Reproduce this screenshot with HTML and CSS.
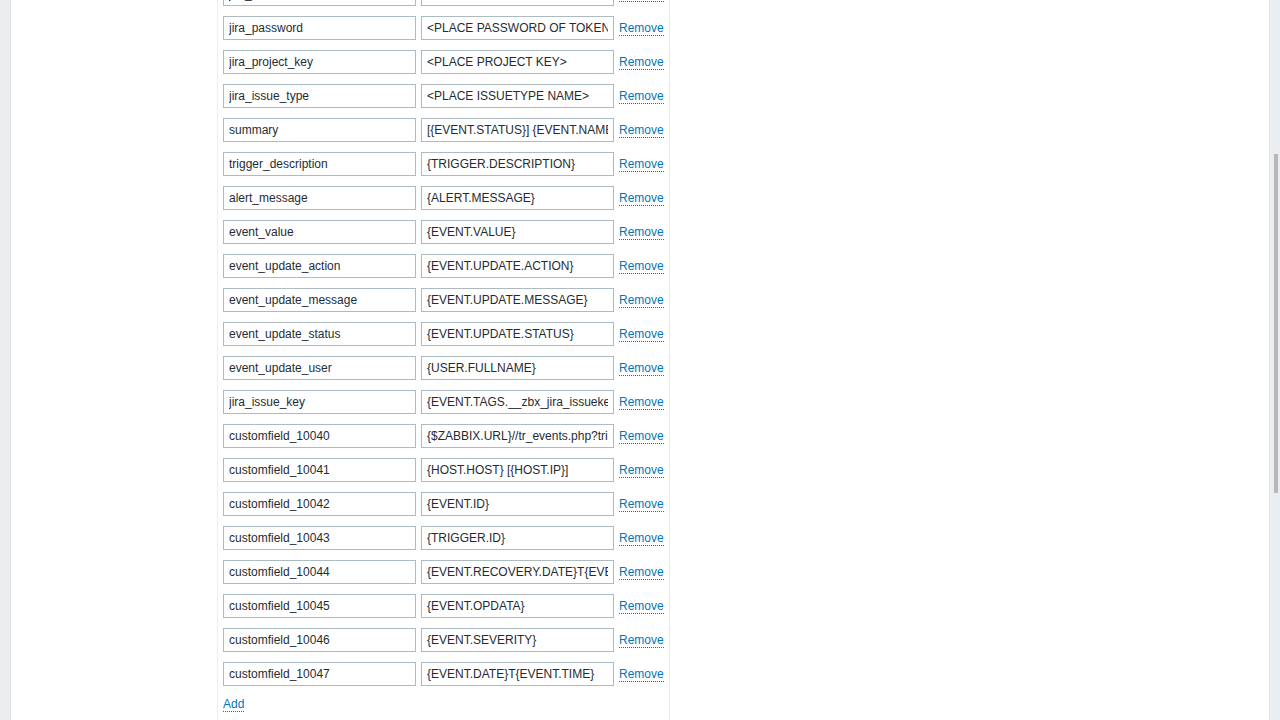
FILE: index.html
```html
<!DOCTYPE html>
<html lang="en">
<head>
  <meta charset="UTF-8">
  <title>Media type parameters</title>
  <link rel="stylesheet" href="styles.css">
</head>
<body>
  <div class="page">
    <!-- Left sidebar edge -->
    <div class="side-edge"></div>

    <div class="content">
      <div class="panel">
        <div class="params">
          <div class="param-row">
            <input class="param-input" type="text" value="jira_user">
            <input class="param-input" type="text" value="&lt;PLACE USERNAME&gt;">
            <a class="link" href="#">Remove</a>
          </div>
          <div class="param-row">
            <input class="param-input" type="text" value="jira_password">
            <input class="param-input" type="text" value="&lt;PLACE PASSWORD OF TOKEN&gt;">
            <a class="link" href="#">Remove</a>
          </div>
          <div class="param-row">
            <input class="param-input" type="text" value="jira_project_key">
            <input class="param-input" type="text" value="&lt;PLACE PROJECT KEY&gt;">
            <a class="link" href="#">Remove</a>
          </div>
          <div class="param-row">
            <input class="param-input" type="text" value="jira_issue_type">
            <input class="param-input" type="text" value="&lt;PLACE ISSUETYPE NAME&gt;">
            <a class="link" href="#">Remove</a>
          </div>
          <div class="param-row">
            <input class="param-input" type="text" value="summary">
            <input class="param-input" type="text" value="[{EVENT.STATUS}] {EVENT.NAME}">
            <a class="link" href="#">Remove</a>
          </div>
          <div class="param-row">
            <input class="param-input" type="text" value="trigger_description">
            <input class="param-input" type="text" value="{TRIGGER.DESCRIPTION}">
            <a class="link" href="#">Remove</a>
          </div>
          <div class="param-row">
            <input class="param-input" type="text" value="alert_message">
            <input class="param-input" type="text" value="{ALERT.MESSAGE}">
            <a class="link" href="#">Remove</a>
          </div>
          <div class="param-row">
            <input class="param-input" type="text" value="event_value">
            <input class="param-input" type="text" value="{EVENT.VALUE}">
            <a class="link" href="#">Remove</a>
          </div>
          <div class="param-row">
            <input class="param-input" type="text" value="event_update_action">
            <input class="param-input" type="text" value="{EVENT.UPDATE.ACTION}">
            <a class="link" href="#">Remove</a>
          </div>
          <div class="param-row">
            <input class="param-input" type="text" value="event_update_message">
            <input class="param-input" type="text" value="{EVENT.UPDATE.MESSAGE}">
            <a class="link" href="#">Remove</a>
          </div>
          <div class="param-row">
            <input class="param-input" type="text" value="event_update_status">
            <input class="param-input" type="text" value="{EVENT.UPDATE.STATUS}">
            <a class="link" href="#">Remove</a>
          </div>
          <div class="param-row">
            <input class="param-input" type="text" value="event_update_user">
            <input class="param-input" type="text" value="{USER.FULLNAME}">
            <a class="link" href="#">Remove</a>
          </div>
          <div class="param-row">
            <input class="param-input" type="text" value="jira_issue_key">
            <input class="param-input" type="text" value="{EVENT.TAGS.__zbx_jira_issuekey}">
            <a class="link" href="#">Remove</a>
          </div>
          <div class="param-row">
            <input class="param-input" type="text" value="customfield_10040">
            <input class="param-input" type="text" value="{$ZABBIX.URL}//tr_events.php?triggerid={TRIGGER.ID}&amp;eventid={EVENT.ID}">
            <a class="link" href="#">Remove</a>
          </div>
          <div class="param-row">
            <input class="param-input" type="text" value="customfield_10041">
            <input class="param-input" type="text" value="{HOST.HOST} [{HOST.IP}]">
            <a class="link" href="#">Remove</a>
          </div>
          <div class="param-row">
            <input class="param-input" type="text" value="customfield_10042">
            <input class="param-input" type="text" value="{EVENT.ID}">
            <a class="link" href="#">Remove</a>
          </div>
          <div class="param-row">
            <input class="param-input" type="text" value="customfield_10043">
            <input class="param-input" type="text" value="{TRIGGER.ID}">
            <a class="link" href="#">Remove</a>
          </div>
          <div class="param-row">
            <input class="param-input" type="text" value="customfield_10044">
            <input class="param-input" type="text" value="{EVENT.RECOVERY.DATE}T{EVENT.RECOVERY.TIME}">
            <a class="link" href="#">Remove</a>
          </div>
          <div class="param-row">
            <input class="param-input" type="text" value="customfield_10045">
            <input class="param-input" type="text" value="{EVENT.OPDATA}">
            <a class="link" href="#">Remove</a>
          </div>
          <div class="param-row">
            <input class="param-input" type="text" value="customfield_10046">
            <input class="param-input" type="text" value="{EVENT.SEVERITY}">
            <a class="link" href="#">Remove</a>
          </div>
          <div class="param-row">
            <input class="param-input" type="text" value="customfield_10047">
            <input class="param-input" type="text" value="{EVENT.DATE}T{EVENT.TIME}">
            <a class="link" href="#">Remove</a>
          </div>
          <div class="add-row">
            <a class="link" href="#">Add</a>
          </div>
        </div>
      </div>
    </div>

    <!-- Scrollbar track -->
    <div class="scroll-track">
      <div class="scroll-thumb"></div>
    </div>
  </div>
</body>
</html>
```

FILE: styles.css
```css
/* General styles */
body {
  margin: 0;
  font-family: "Liberation Sans", Arial, sans-serif;
  font-size: 12px;
  color: #1f2c33;
  background-color: #ffffff;
}

/* Page frame */
.page {
  display: flex;
  height: 720px;
  overflow: hidden;
}

.side-edge {
  width: 10px;
  flex-shrink: 0;
  background-color: #ebeef0;
  border-right: 1px solid #dfe4e7;
}

.content {
  flex: 1;
  overflow: hidden;
}

/* Form panel */
.panel {
  width: 451px;
  height: 760px;
  margin-left: 206px;
  margin-top: -18px;
  border-left: 1px solid #ebeef0;
  border-right: 1px solid #ebeef0;
}

.params {
  display: flex;
  flex-direction: column;
  gap: 10px;
  padding-left: 5px;
}

/* Parameter rows */
.param-row {
  display: flex;
  align-items: center;
  gap: 5px;
}

.param-input {
  width: 193px;
  height: 24px;
  box-sizing: border-box;
  margin: 0;
  padding: 0 5px;
  border: 1px solid #acbbc2;
  border-radius: 0;
  background-color: #ffffff;
  font-family: "Liberation Sans", Arial, sans-serif;
  font-size: 12px;
  color: #1f2c33;
  outline: none;
}

.link {
  color: #0275b8;
  text-decoration: none;
  line-height: 14px;
  border-bottom: 1px dotted #0275b8;
}

.add-row {
  padding-top: 1px;
  display: flex;
}

/* Scrollbar */
.scroll-track {
  width: 10px;
  flex-shrink: 0;
  background-color: #ebeef0;
  border-left: 1px solid #e3e7ea;
}

.scroll-thumb {
  width: 4px;
  height: 339px;
  margin-top: 154px;
  margin-left: 4px;
  background-color: #b8b8b8;
}
```
